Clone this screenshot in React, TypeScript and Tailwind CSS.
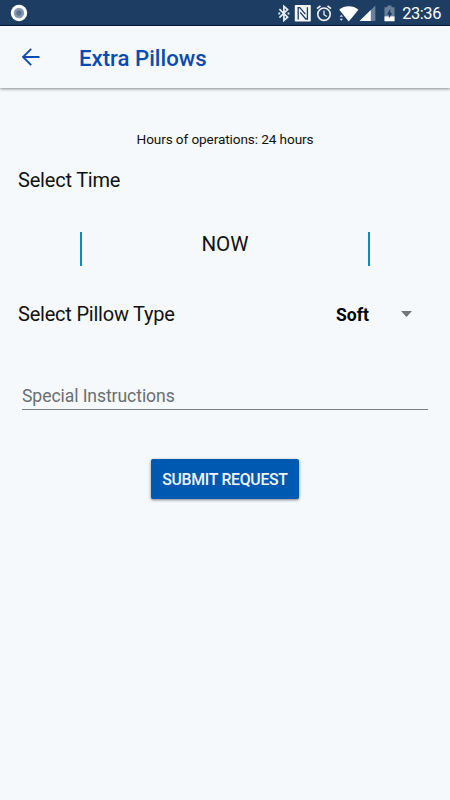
import { ReactNode } from "react";

function StatusIcon({
  width,
  className = "",
  children,
}: {
  width: number;
  className?: string;
  children: ReactNode;
}) {
  return (
    <svg width={width} height="26" viewBox={`0 0 ${width} 26`} className={`shrink-0 ${className}`} aria-hidden="true">
      {children}
    </svg>
  );
}

function StatusBar() {
  return (
    <div className="flex h-[26px] items-center border-b border-[#08194a] bg-[#1d3d62] text-white">
      <StatusIcon width={18} className="ml-[10px] mr-auto">
        <circle cx="9" cy="13" r="8.2" fill="#fff" />
        <circle cx="9" cy="13" r="5.2" fill="#8799b0" />
        <circle cx="9" cy="13" r="2.7" fill="#5c7491" />
      </StatusIcon>

      {/* bluetooth */}
      <StatusIcon width={12}>
        <path
          d="M1.4 9.2l8.2 8-3.7 3.2V6.4l3.7 3.2-8.2 8"
          fill="none"
          stroke="#e8edf3"
          strokeWidth="1.7"
        />
        <path d="M0.4 12.6h1.8v1.8H0.4zM9.6 12.6h1.8v1.8H9.6z" fill="#e8edf3" />
      </StatusIcon>

      {/* nfc */}
      <StatusIcon width={18} className="ml-[4px]">
        <rect x="0.8" y="5" width="16" height="16.5" rx="0.8" fill="#f3f6f9" />
        <path
          d="M4.2 19.4V7.6h1.6l5.6 6.6M13.4 7.2v11.8h-1.6l-5.6-6.6"
          fill="none"
          stroke="#1d3d62"
          strokeWidth="1.3"
        />
      </StatusIcon>

      {/* alarm */}
      <StatusIcon width={18} className="ml-[4px]">
        <g fill="none" stroke="#eef2f6" strokeWidth="1.6">
          <circle cx="8" cy="14.2" r="6.2" />
          <path d="M8 10.4v4.3l2.9 1.8" strokeWidth="1.3" />
          <path d="M1 8.7l3.5-2.9M15 8.7l-3.5-2.9" />
        </g>
      </StatusIcon>

      {/* wifi */}
      <StatusIcon width={20} className="ml-[5px]">
        <path d="M0.2 9.8C5.4 5.2 14.2 5.2 19.4 9.8L9.8 21.6Z" fill="#fff" />
        <path d="M0.6 16.8l1.7-2 1.7 2zM0.6 18.7l1.7 2 1.7-2z" fill="#dfe6ed" />
      </StatusIcon>

      {/* signal */}
      <StatusIcon width={17}>
        <path d="M16.4 5.6V21H0.6Z" fill="#6b819b" />
        <path d="M11.8 9.9V21H0.6Z" fill="#fff" />
      </StatusIcon>

      {/* battery */}
      <StatusIcon width={11} className="ml-[8px]">
        <path d="M0.5 7.2h3V5.4h4v1.8h3v14h-10z" fill="#6b819b" />
        <path d="M0.5 16.4h10v4.8h-10z" fill="#fff" />
        <path d="M6.3 8.8L2.9 14.5h2v4l3.3-5.4H6.3z" fill="#1d3d62" />
      </StatusIcon>

      <span className="ml-[7px] mr-[9px] pt-[2px] text-[16.4px] leading-6 tracking-[-0.4px]">23:36</span>
    </div>
  );
}

function Header() {
  return (
    <header className="flex h-[62px] items-center bg-[#f5f9fc] text-[#0b4aae] shadow-[0_1px_3px_rgba(0,0,0,0.45)]">
      <button type="button" aria-label="Back" className="ml-[21px]">
        <svg width="20" height="20" viewBox="0 0 20 20" fill="none" stroke="currentColor" strokeWidth="1.8">
          <path d="M18.5 10H2.2M10.2 1.8L2 10l8.2 8.2" />
        </svg>
      </button>
      <h1 className="ml-[38px] pt-px text-[22.2px] font-medium leading-7">Extra Pillows</h1>
    </header>
  );
}

export default function App() {
  return (
    <div className="h-[800px] w-[450px] overflow-hidden bg-[#f5f9fc] font-['Roboto',sans-serif] text-[#111]">
      <StatusBar />
      <Header />

      <main>
        <p className="pt-[41px] text-center text-[13.6px] leading-5 tracking-[-0.1px]">
          Hours of operations: 24 hours
        </p>

        <h2 className="mt-[17px] pl-[18px] text-[20px] leading-7 tracking-[-0.2px]">Select Time</h2>

        <div className="mx-[80px] mt-[38px] flex h-[34px] justify-between border-l-2 border-r-2 border-[#0a8cc8]">
          <span className="w-full text-center text-[20.6px] leading-6">NOW</span>
        </div>

        <div className="mt-[34px] flex h-7 items-center pl-[18px] pr-[38px]">
          <span className="text-[20px] leading-7 tracking-[-0.22px]">Select Pillow Type</span>
          <span className="ml-auto pt-[2px] text-[17.6px] font-bold leading-7 text-black">Soft</span>
          <svg width="11" height="6" viewBox="0 0 11 6" className="ml-[32px]" aria-hidden="true">
            <path d="M0 0h11L5.5 6z" fill="#737678" />
          </svg>
        </div>

        <div className="mx-[22px] mt-[56px] border-b border-[#7b7e81] pb-px">
          <input
            type="text"
            placeholder="Special Instructions"
            className="block h-6 w-full bg-transparent text-[17.6px] tracking-[-0.09px] outline-none placeholder:text-[#6b6e71]"
          />
        </div>

        <div className="mt-[49px] flex justify-center">
          <button
            type="button"
            className="h-[40px] w-[148px] rounded-[2px] bg-[#0059b0] pt-[2px] text-[15.8px] font-medium tracking-[-0.28px] text-[#f1f5fb] shadow-[0_1px_3px_rgba(0,0,0,0.5)]"
          >
            SUBMIT REQUEST
          </button>
        </div>
      </main>
    </div>
  );
}
